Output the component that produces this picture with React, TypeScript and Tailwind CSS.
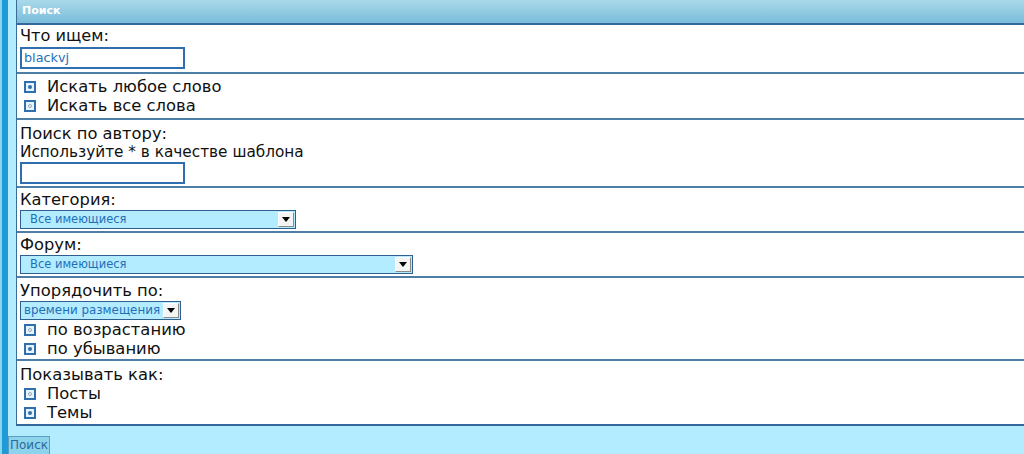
import React from "react";

const font = { fontFamily: '"DejaVu Sans", Verdana, sans-serif' };

function Radio({ checked, label }: { checked: boolean; label: string }) {
  return (
    <div className="flex items-center h-[19px]">
      <div className="ml-[4px] w-[12px] h-[12px] border-2 border-[#2f6fb0] bg-[#e8f4fb] flex items-center justify-center">
        {checked ? (
          <div className="w-[4px] h-[4px] rounded-full bg-[#2f6fb0]" />
        ) : (
          <div className="w-[4px] h-[4px] rounded-full border border-[#a0a8b0]" />
        )}
      </div>
      <span className="ml-[11px] text-[16.4px] leading-[19px] text-[#111]">{label}</span>
    </div>
  );
}

function Select({ width, text, pl, size }: { width: string; text: string; pl: string; size: string }) {
  return (
    <div className={`${width} h-[19px] border border-[#2f5f8f] bg-[#b3ecfe] flex items-center justify-between`}>
      <span className={`${pl} ${size} text-[#1f6fb8] whitespace-nowrap`}>{text}</span>
      <div className="w-[16px] h-[15px] mr-[1px] shrink-0 bg-[#f4f4f4] border border-[#8a8a8a] border-t-white border-l-white flex items-center justify-center">
        <svg width="8" height="5" viewBox="0 0 8 5">
          <path d="M0 0H8L4 5Z" fill="#000" />
        </svg>
      </div>
    </div>
  );
}

export default function App() {
  return (
    <div className="flex h-[454px] w-[1024px] bg-[#b3ecfe] overflow-hidden" style={font}>
      <div className="w-[2px] bg-[#86d4ee]" />
      <div className="w-[6px] bg-[#1e9bd6]" />
      <div className="flex-1 flex flex-col">
        <div className="pl-[8px]">
          <div className="border-l border-[#3a6e97] bg-white">
            <div className="h-[25px] bg-gradient-to-b from-[#a9d9e9] to-[#79bddb] border-b-2 border-[#34689a] flex items-center pl-[5px]">
              <span className="text-[11px] font-bold text-white">Поиск</span>
            </div>
            {/* Row 1 */}
            <div className="pl-[3px] pt-[2px] pb-[3px] border-b-2 border-[#4d7ea8]">
              <div className="text-[16.2px] leading-[18px] text-[#111]">Что ищем:</div>
              <div className="mt-[2px] w-[165px] h-[22px] border-2 border-[#2f6fb0] bg-white flex items-center pl-[2px]">
                <span className="text-[12.8px] text-[#1f6fb8]">blackvj</span>
              </div>
            </div>
            {/* Row 2 */}
            <div className="pl-[3px] pt-[3px] pb-[3px] border-b-2 border-[#4d7ea8]">
              <Radio checked label="Искать любое слово" />
              <Radio checked={false} label="Искать все слова" />
            </div>
            {/* Row 3 */}
            <div className="pl-[3px] pt-[4px] pb-[2px] border-b-2 border-[#4d7ea8]">
              <div className="text-[16.3px] leading-[19px] text-[#111]">Поиск по автору:</div>
              <div className="text-[15.3px] leading-[19px] text-[#111]">Используйте * в качестве шаблона</div>
              <div className="w-[165px] h-[22px] border-2 border-[#2f6fb0] bg-white" />
            </div>
            {/* Row 4 */}
            <div className="pl-[3px] pt-[2px] pb-[2px] border-b-2 border-[#4d7ea8]">
              <div className="text-[16.3px] leading-[19px] text-[#111]">Категория:</div>
              <div className="mt-[1px]">
                <Select width="w-[276px]" text="Все имеющиеся" pl="pl-[9px]" size="text-[11.5px]" />
              </div>
            </div>
            {/* Row 5 */}
            <div className="pl-[3px] pt-[2px] pb-[2px] border-b-2 border-[#4d7ea8]">
              <div className="text-[16.3px] leading-[19px] text-[#111]">Форум:</div>
              <div className="mt-[1px]">
                <Select width="w-[393px]" text="Все имеющиеся" pl="pl-[9px]" size="text-[11.5px]" />
              </div>
            </div>
            {/* Row 6 */}
            <div className="pl-[3px] pt-[3px] pb-[1px] border-b-2 border-[#4d7ea8]">
              <div className="text-[16.4px] leading-[19px] text-[#111]">Упорядочить по:</div>
              <div className="mt-[1px]">
                <Select width="w-[161px]" text="времени размещения" pl="pl-[3px]" size="text-[11.9px]" />
              </div>
              <Radio checked={false} label="по возрастанию" />
              <Radio checked label="по убыванию" />
            </div>
            {/* Row 7 */}
            <div className="pl-[3px] pt-[4px] pb-[2px] border-b-2 border-[#34689a]">
              <div className="text-[16.4px] leading-[19px] text-[#111]">Показывать как:</div>
              <Radio checked={false} label="Посты" />
              <Radio checked label="Темы" />
            </div>
          </div>
        </div>
        <div className="pt-[10px]">
          <button className="w-[42px] h-[19px] bg-[#8ed3ec] border border-[#5a9fc4] text-[12px] leading-[17px] text-[#2c6a9a] flex items-center justify-center" style={font}>
            Поиск
          </button>
        </div>
      </div>
    </div>
  );
}
